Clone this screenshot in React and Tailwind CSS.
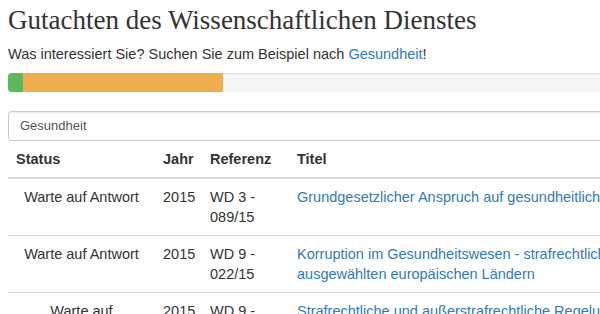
import React from 'react';

const rows = [
  {
    status: ['Warte auf Antwort'],
    year: '2015',
    ref: ['WD 3 -', '089/15'],
    title: ['Grundgesetzlicher Anspruch auf gesundheitliche Versorgung von Asylbewerbern'],
  },
  {
    status: ['Warte auf Antwort'],
    year: '2015',
    ref: ['WD 9 -', '022/15'],
    title: ['Korruption im Gesundheitswesen - strafrechtliche Regelungen in', 'ausgewählten europäischen Ländern'],
  },
  {
    status: ['Warte auf', 'Antwort'],
    year: '2015',
    ref: ['WD 9 -', '023/15'],
    title: ['Strafrechtliche und außerstrafrechtliche Regelungen zur Korruption im', 'Gesundheitswesen'],
  },
];

const App = () => {
  return (
    <div className="w-[600px] h-[314px] overflow-hidden bg-white text-[#333] text-[14.5px] leading-[20px] font-['Liberation_Sans',Arial,sans-serif]">
      <div className="w-[960px] px-2">
        <h1 className="pt-[5px] text-[27px] leading-[30px] text-[#333] font-['Liberation_Serif','Times_New_Roman',serif]">
          Gutachten des Wissenschaftlichen Dienstes
        </h1>
        <p className="mt-[9px]">
          Was interessiert Sie? Suchen Sie zum Beispiel nach{' '}
          <a className="text-[#337ab7]">Gesundheit</a>!
        </p>

        {/* progress */}
        <div className="mt-[9px] h-[19px] rounded bg-[#f5f5f5] shadow-[inset_0_1px_2px_rgba(0,0,0,0.1)] flex overflow-hidden">
          <div className="w-[15px] bg-[#5cb85c]" />
          <div className="w-[200px] bg-[#f0ad4e]" />
        </div>

        <div className="mt-[19px] h-[30px] border border-[#ccc] rounded-[3px] px-[11px] flex items-center text-[13px] text-[#555] shadow-[inset_0_1px_1px_rgba(0,0,0,0.075)]">
          Gesundheit
        </div>

        <table className="table-fixed border-collapse w-full">
          <colgroup>
            <col className="w-[147px]" />
            <col className="w-[47px]" />
            <col className="w-[87px]" />
            <col />
          </colgroup>
          <thead>
            <tr className="border-b-2 border-[#ddd]">
              <th className="p-2 text-left font-bold">Status</th>
              <th className="p-2 text-left font-bold">Jahr</th>
              <th className="p-2 text-left font-bold">Referenz</th>
              <th className="p-2 text-left font-bold">Titel</th>
            </tr>
          </thead>
          <tbody>
            {rows.map((r, i) => (
              <tr key={i} className="border-t border-[#ddd] align-top">
                <td className="p-2 text-center">
                  {r.status.map((s, j) => (
                    <div key={j}>{s}</div>
                  ))}
                </td>
                <td className="p-2">{r.year}</td>
                <td className="p-2">
                  {r.ref.map((s, j) => (
                    <div key={j} className="whitespace-nowrap">{s}</div>
                  ))}
                </td>
                <td className="p-2 text-[#337ab7]">
                  {r.title.map((s, j) => (
                    <div key={j} className="whitespace-nowrap">{s}</div>
                  ))}
                </td>
              </tr>
            ))}
          </tbody>
        </table>
      </div>
    </div>
  );
};

export default App;
